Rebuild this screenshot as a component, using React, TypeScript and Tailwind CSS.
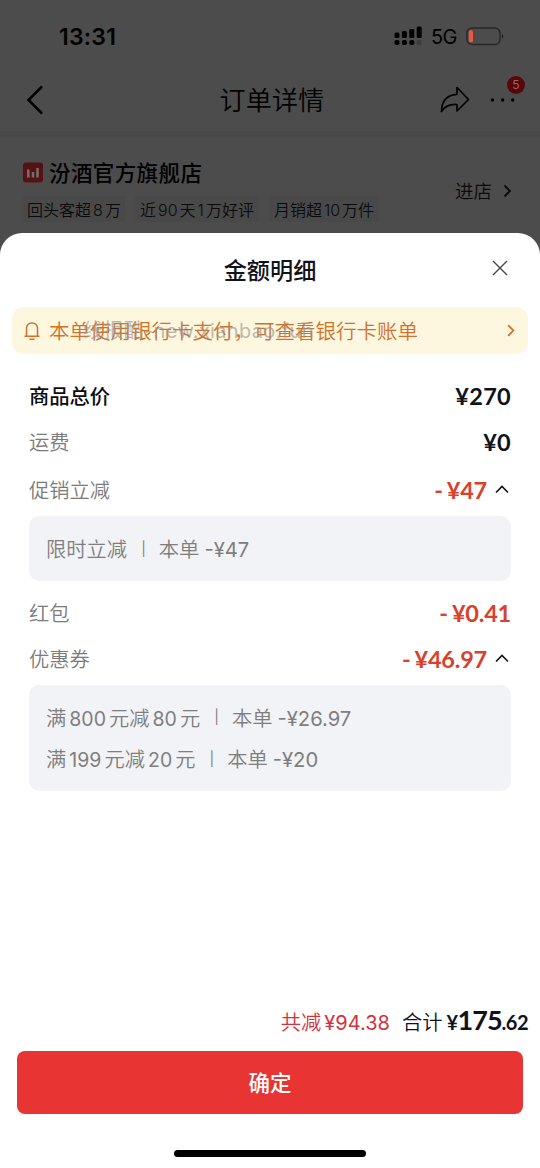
import React from 'react';
import { clsx } from 'clsx';

type Discount = { title: string; amount: string };

const promotions: Discount[] = [{ title: '限时立减', amount: '-¥47' }];

const coupons: Discount[] = [
    { title: '满800元减80元', amount: '-¥26.97' },
    { title: '满199元减20元', amount: '-¥20' },
];

const shopTags = [
    { text: '回头客超8万', box: 'w-[102px]' },
    { text: '近90天1万好评', box: 'w-[124px]' },
    { text: '月销超10万件', box: 'w-[110px]' },
];

// Digits get a little air on both sides when they sit between Chinese characters
function Spaced({ text, gap }: { text: string; gap: string }) {
    return (
        <>
            {text.split(/(\d+)/).map((part, i) => (
                <span key={i} className={/^\d/.test(part) ? gap : undefined}>{part}</span>
            ))}
        </>
    );
}

function StatusBar() {
    return (
        <div className="flex h-[72px] shrink-0 items-center justify-between pl-[59px] pr-[36px]">
            <span className="pt-[2px] text-[23px] font-semibold leading-none tracking-[0.2px]">13:31</span>
            <div className="flex items-center">
                <svg width="28" height="20" viewBox="0 0 28 20" className="mr-[9px]">
                    <rect x="0.5" y="6.5" width="5" height="5.5" rx="1.5" />
                    <rect x="7.9" y="5" width="5" height="7" rx="1.5" />
                    <rect x="15.3" y="3" width="5" height="9" rx="1.5" />
                    <rect x="22.7" y="0.5" width="5" height="11.5" rx="1.5" />
                    <rect x="0.5" y="14" width="5" height="5" rx="1.8" />
                    <rect x="7.9" y="14" width="5" height="5" rx="1.8" />
                    <rect x="15.3" y="14" width="5" height="5" rx="1.8" />
                    <rect x="22.7" y="14" width="5" height="5" rx="1.8" fill="#3d3d3d" />
                </svg>
                <span className="mr-[9px] pt-px text-[20px] leading-none tracking-[-0.5px]">5G</span>
                <svg width="38" height="19" viewBox="0 0 38 19">
                    <rect x="1" y="1" width="33" height="16.5" rx="5" fill="none" stroke="#282828" strokeWidth="1.4" />
                    <rect x="2.8" y="3.2" width="4.2" height="12" rx="1.6" fill="#ee5643" />
                    <path d="M36 7c1.6.6 1.6 4 0 4.6z" fill="#1c1c1c" />
                </svg>
            </div>
        </div>
    );
}

function NavBar() {
    return (
        <div className="relative flex h-[59px] shrink-0 items-center justify-center pb-[3px]">
            <svg width="18" height="30" viewBox="0 0 18 30" className="absolute left-[26px] top-[13px]" fill="none" stroke="#000" strokeWidth="2.5">
                <path d="M16 1.5 2.5 15 16 28.5" />
            </svg>
            <h1 className="pl-[4px] pt-px text-[26px] font-[350] leading-none tracking-[0.3px]">订单详情</h1>
            <svg width="30" height="28" viewBox="0 0 30 28" className="absolute left-[440px] top-[14px]" fill="none" stroke="#000" strokeWidth="1.7" strokeLinejoin="round">
                <path d="M17 1.5 28.5 13.5 17 25V18.5C9.5 18 5 20 1.5 25.5 1.7 14.5 7 8.8 17 8.3z" />
            </svg>
            <svg width="26" height="6" viewBox="0 0 26 6" className="absolute left-[490px] top-[25px]">
                <circle cx="2.5" cy="3" r="1.7" />
                <circle cx="12.6" cy="3" r="1.7" />
                <circle cx="22.7" cy="3" r="1.7" />
            </svg>
            <span className="absolute left-[507px] top-[4px] flex h-[18px] w-[18px] items-center justify-center rounded-full bg-[#5b0509] text-[12px] leading-none text-[#8d6a6a]">5</span>
        </div>
    );
}

function ShopCard() {
    return (
        <div className="flex h-[95px] shrink-0 justify-between pl-[23px] pr-[28px] pt-[22px]">
            <div>
                <div className="flex h-[26px] items-center">
                    <svg width="21" height="21" viewBox="0 0 21 21" className="mb-px mr-[5px]">
                        <rect x="0" y="0.5" width="20" height="20" rx="3" fill="#551214" />
                        <path d="M5.3 7.5v8M10 10v5.5M14.5 6v9.5" stroke="#776b6b" strokeWidth="2.6" />
                    </svg>
                    <h2 className="pt-[2px] text-[21.5px] font-medium leading-none tracking-[0.4px]">汾酒官方旗舰店</h2>
                </div>
                <div className="mt-[10px] flex gap-[10px]">
                    {shopTags.map((tag) => (
                        <span key={tag.text} className={clsx('flex h-[26px] items-center justify-center whitespace-nowrap rounded-[3px] bg-[#494949] pt-px text-[16px] font-[350] leading-none text-[#0a0a0a]', tag.box)}>
                            <Spaced text={tag.text} gap="mx-[2px]" />
                        </span>
                    ))}
                </div>
            </div>
            <div className="flex h-[62px] items-center text-[18.5px] font-[350] leading-none text-[#0a0a0a]">
                <span className="pt-px">进店</span>
                <svg width="9" height="14" viewBox="0 0 9 14" className="ml-[11px]" fill="none" stroke="#0a0a0a" strokeWidth="1.8">
                    <path d="M1.5 1.5 7 7 1.5 12.5" />
                </svg>
            </div>
        </div>
    );
}

function Notice() {
    return (
        <div className="relative mx-[12px] flex h-[47px] shrink-0 items-center rounded-[12px] bg-[#fdf7df] pl-[12px] pr-[13px] text-[#d0722c]">
            <svg width="16" height="20" viewBox="0 0 16 20" className="mr-[9px]" fill="none" stroke="currentColor" strokeWidth="1.5">
                <path d="M0.5 15.3H15.5M2.5 15V7.8C2.5 4 4.8 2 8 2s5.5 2 5.5 5.8V15M5.5 18.3h5" />
            </svg>
            <span className="pt-[3px] text-[20.5px] font-[350] leading-none">本单使用银行卡支付，可查看银行卡账单</span>
            <svg width="8" height="13" viewBox="0 0 8 13" className="ml-auto" fill="none" stroke="currentColor" strokeWidth="1.8">
                <path d="M1.2 1.2 6.3 6.5 1.2 11.8" />
            </svg>
            <span className="absolute left-[71px] top-[14px] whitespace-nowrap text-[20px] leading-none tracking-[0.35px] text-[#8f8f8f]/60">线报酷-new.xianbao.fun</span>
        </div>
    );
}

function Row({ label, value, strong, open, red }: { label: string; value: string; strong?: boolean; open?: boolean; red?: boolean }) {
    return (
        <div className="flex h-[46px] items-center justify-between">
            <span className={clsx('pt-[2px] text-[20.3px] leading-none', strong ? 'font-medium text-[#0c0c0c]' : 'font-[350] text-[#7b7b7b]')}>{label}</span>
            <span className={clsx("flex items-center font-['Lato'] text-[23.5px] font-bold leading-none", red ? 'tracking-[-0.2px] text-[#d8412b]' : 'tracking-[0.3px] text-[#11131c]')}>
                {red && <span className="mr-[4px] pt-[2px]">-</span>}
                <span className="pt-[2px]">{value}</span>
                {open && (
                    <svg width="14" height="9" viewBox="0 0 14 9" className="mb-px ml-[8px] mr-[2px]" fill="none" stroke="#111" strokeWidth="1.6">
                        <path d="M1 7.5 7 1.5 13 7.5" />
                    </svg>
                )}
            </span>
        </div>
    );
}

function DiscountBox({ items, className }: { items: Discount[]; className: string }) {
    return (
        <div className={clsx('flex flex-col justify-center rounded-[10px] bg-[#f2f3f7] pl-[17px] pt-[3px] text-[20.3px] text-[#7e7e7e]', className)}>
            {items.map((item) => (
                <div key={item.title} className="flex h-[41.5px] items-center whitespace-nowrap leading-none">
                    <span className="font-[350]"><Spaced text={item.title} gap="mx-[3px] text-[19.5px] font-normal" /></span>
                    <span className="mb-[3px] ml-[14px] mr-[13px] text-[14px]">|</span>
                    <span className="font-[350]">本单</span>
                    <span className="ml-[5px] text-[20.2px]">{item.amount}</span>
                </div>
            ))}
        </div>
    );
}

export default function App() {
    return (
        <div className="flex h-[1168px] w-[540px] flex-col overflow-hidden bg-[#4c4c4c] font-['Inter','Noto_Sans_CJK_SC',sans-serif] text-black">
            <StatusBar />
            <NavBar />
            <div className="h-[7px] shrink-0 bg-[#494949]" />
            <ShopCard />

            {/* Amount details sheet */}
            <div className="flex flex-1 flex-col rounded-t-[22px] bg-white">
                <div className="relative flex h-[74px] shrink-0 items-center justify-center">
                    <h2 className="pt-[3px] text-[23.2px] font-medium leading-none text-[#11131c]">金额明细</h2>
                    <svg width="16" height="16" viewBox="0 0 16 16" className="absolute right-[32px] top-[27px]" stroke="#444" strokeWidth="1.4">
                        <path d="M1 1 15 15M15 1 1 15" />
                    </svg>
                </div>

                <Notice />

                <div className="flex flex-col px-[29px] pt-[19px]">
                    <Row label="商品总价" value="¥270" strong />
                    <Row label="运费" value="¥0" />
                    <div className="h-[2px]" />
                    <Row label="促销立减" value="¥47" red open />
                    <DiscountBox items={promotions} className="mt-[3px] h-[65px]" />
                    <div className="h-[9px]" />
                    <Row label="红包" value="¥0.41" red />
                    <Row label="优惠券" value="¥46.97" red open />
                    <DiscountBox items={coupons} className="mt-[3px] h-[106px]" />
                </div>

                <div className="mt-auto flex h-[36px] shrink-0 items-baseline justify-end pr-[12px] text-[20.3px] font-[350] leading-[36px]">
                    <span className="text-[#d2323a]">共减</span>
                    <span className="ml-[3px] text-[20px] font-normal text-[#d2323a]">¥94.38</span>
                    <span className="ml-[12px] text-[#11131c]">合计</span>
                    <span className="ml-[4px] font-['Lato'] text-[20px] font-bold tracking-[-0.5px] text-[#11131c]">
                        ¥<span className="text-[27px] leading-none tracking-[-1px]">175</span>.62
                    </span>
                </div>
                <button className="mx-[17px] mt-[11px] h-[63px] shrink-0 rounded-[8px] bg-[#e93434] pt-[2px] text-[21.5px] font-medium leading-none text-white">确定</button>
                <div className="mx-auto mb-[11px] mt-[36px] h-[7px] w-[192px] shrink-0 rounded-full bg-black" />
            </div>
        </div>
    );
}
